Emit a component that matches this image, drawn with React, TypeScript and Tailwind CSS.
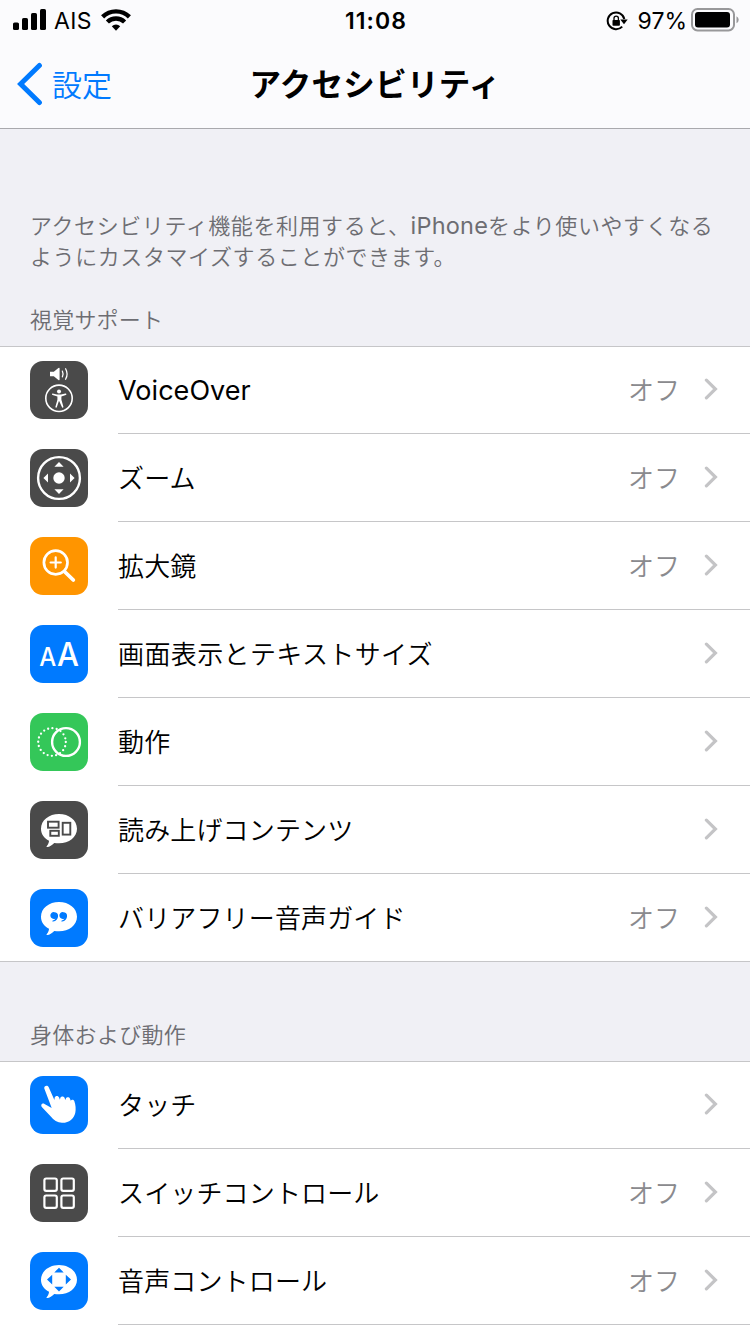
import React from 'react';

interface RowItem {
    label: string;
    icon: React.ReactNode;
    bg: string;
    value?: string;
    labelClass?: string;
}

const BUBBLE = 'M29 13C39 13 47 19.3 47 27.7C47 36 39 42.3 29 42.3C27.4 42.3 25.8 42.2 24.3 41.9C22 44.3 19.6 45.7 17.2 46C16.5 46 16.3 45.4 16.8 44.9C18.3 43.2 19 41.4 19 39.7C14 37.2 11 32.8 11 27.7C11 19.3 19 13 29 13Z';

const VoiceOverIcon = () => (
    <>
        <path d="M20 10.8h3.8l4.6-3.9q1.2-.7 1.2.5v11.2q0 1.2-1.2.5l-4.6-3.8H20z" fill="#fff" />
        <path d="M32.4 10.2q1.4 2.8 0 5.6M35.6 7.7q3 5.3 0 10.6" fill="none" stroke="#fff" strokeWidth="1.3" strokeLinecap="round" />
        <circle cx="29" cy="37.3" r="13.2" fill="none" stroke="#fff" strokeWidth="1.6" />
        <circle cx="29" cy="30.6" r="2" fill="#fff" />
        <path d="M22.6 32.4l4.4 1.2h4l4.4-1.2q1-.1 1 .8q0 .5-.6.7l-4.4 1.5v3.4l2 7q0 .9-.7.9q-.6 0-.8-.6L29 39.8l-2.1 6.3q-.2.6-.8.6q-.7 0-.7-.9l2-7v-3.4l-4.8-1.5q-.6-.2-.6-.7q0-.9.6-.8z" fill="#fff" />
    </>
);

const ZoomIcon = () => (
    <>
        <circle cx="29" cy="29" r="20.9" fill="none" stroke="#fff" strokeWidth="2.4" />
        <circle cx="29" cy="29" r="5.7" fill="#fff" />
        <path d="M29 13l4.6 4.7h-9.2zM29 45l4.6-4.7h-9.2zM13.4 29l4.6-4.6v9.2zM44.6 29L40 24.4v9.2z" fill="#fff" />
    </>
);

const MagnifierIcon = () => (
    <g fill="none" stroke="#fff" strokeLinecap="round">
        <circle cx="25.7" cy="25.5" r="11.8" strokeWidth="2.7" />
        <path d="M25.7 20.4v10.2M20.6 25.5h10.2" strokeWidth="2.2" />
        <path d="M35 35l8.3 8" strokeWidth="3.8" />
    </g>
);

const TextSizeIcon = () => (
    <g fill="#fff" className="font-['Inter'] font-medium">
        <text x="9.2" y="40.7" fontSize="25" textLength="17" lengthAdjust="spacingAndGlyphs">A</text>
        <text x="27" y="40.7" fontSize="32.5" textLength="22" lengthAdjust="spacingAndGlyphs">A</text>
    </g>
);

const MotionIcon = () => (
    <g fill="none" stroke="#fff" strokeLinecap="round">
        <circle cx="22" cy="29" r="13.8" strokeWidth="2.3" strokeDasharray="0 4.335" />
        <circle cx="36" cy="29" r="13.9" strokeWidth="2.4" />
    </g>
);

const SpokenIcon = () => (
    <>
        <path d={BUBBLE} fill="#fff" />
        <g fill="none" stroke="#4a4a4a" strokeWidth="1.9">
            <rect x="18" y="20.7" width="10.6" height="6" />
            <rect x="20.3" y="29.8" width="8.5" height="5" />
            <rect x="32.7" y="21.8" width="7.6" height="11.8" />
        </g>
    </>
);

const QuoteIcon = () => (
    <>
        <path d={BUBBLE} fill="#fff" />
        <g fill="#007aff">
            <path d="M24.5 23.2a3.6 3.6 0 0 1 3.6 3.8c0 3-2.2 5.1-4.9 5.6q-.9.1-.9-.5q0-.4.6-.6q2-.7 2.6-2.1a3.4 3.4 0 1 1-1-6.2z" />
            <path d="M33.5 23.2a3.6 3.6 0 0 1 3.6 3.8c0 3-2.2 5.1-4.9 5.6q-.9.1-.9-.5q0-.4.6-.6q2-.7 2.6-2.1a3.4 3.4 0 1 1-1-6.2z" />
        </g>
    </>
);

const TouchIcon = () => (
    <path
        d="M14.3 12.6c-.7-2.5 3-4.1 4.3-1.5L24.4 24l.3-2.4c.5-2.3 3.8-2.2 4.4-.1l.8 2.2l.4-1.6c.6-2 3.6-2 4.3 0l.8 2l.5-1.5c.7-1.8 3.4-1.7 4.1.2l.8 1.9c.5-1.4 2.8-1.5 3.5.4c1.4 4 1.7 8.2 1 11.6c-1.2 6-6.6 10.4-13.3 10.1c-4.6-.3-8.4-2.6-11.2-6.3l-9-9.6c-1.5-2 .7-4.2 2.7-2.9l7.2 3.9z"
        fill="#fff"
    />
);

const SwitchIcon = () => (
    <g fill="none" stroke="#fff" strokeWidth="2.2">
        <rect x="14.4" y="14.5" width="12.4" height="12.4" rx="1.8" />
        <rect x="31.4" y="14.5" width="12.4" height="12.4" rx="1.8" />
        <rect x="14.4" y="31.5" width="12.4" height="12.4" rx="1.8" />
        <rect x="31.4" y="31.5" width="12.4" height="12.4" rx="1.8" />
    </g>
);

const VoiceControlIcon = () => (
    <>
        <path d={BUBBLE} fill="#fff" />
        <path d="M29 15.7l4.7 4.7h-9.4zM29 39.4l4.7-4.7h-9.4zM17 27.6l5.2-4.8v9.6zM41 27.6l-5.2-4.8v9.6z" fill="#007aff" />
    </>
);

const VISION: RowItem[] = [
    { label: 'VoiceOver', icon: <VoiceOverIcon />, bg: 'bg-[#4a4a4a]', value: 'オフ', labelClass: "pt-[5px] font-['Inter'] text-[27px] font-normal tracking-[0.05px]" },
    { label: 'ズーム', icon: <ZoomIcon />, bg: 'bg-[#4a4a4a]', value: 'オフ' },
    { label: '拡大鏡', icon: <MagnifierIcon />, bg: 'bg-[#ff9500]', value: 'オフ' },
    { label: '画面表示とテキストサイズ', icon: <TextSizeIcon />, bg: 'bg-[#007aff]', labelClass: 'text-[26px] tracking-[0.38px]' },
    { label: '動作', icon: <MotionIcon />, bg: 'bg-[#34c759]' },
    { label: '読み上げコンテンツ', icon: <SpokenIcon />, bg: 'bg-[#4a4a4a]' },
    { label: 'バリアフリー音声ガイド', icon: <QuoteIcon />, bg: 'bg-[#007aff]', value: 'オフ' },
];

const PHYSICAL: RowItem[] = [
    { label: 'タッチ', icon: <TouchIcon />, bg: 'bg-[#007aff]' },
    { label: 'スイッチコントロール', icon: <SwitchIcon />, bg: 'bg-[#4a4a4a]', value: 'オフ' },
    { label: '音声コントロール', icon: <VoiceControlIcon />, bg: 'bg-[#007aff]', value: 'オフ' },
];

const Row: React.FC<{ item: RowItem; last?: boolean }> = ({ item, last }) => (
    <div className="flex h-[88px] pl-[30px]">
        <div className={`mt-[15px] h-[58px] w-[58px] shrink-0 overflow-hidden rounded-[13px] ${item.bg}`}>
            <svg viewBox="0 0 58 58" className="h-[58px] w-[58px]">{item.icon}</svg>
        </div>
        <div className={`ml-[30px] flex flex-1 items-center border-b pb-[2px] pr-8 ${last ? 'border-transparent' : 'border-[#c6c6c8]'}`}>
            <span className={`flex-1 whitespace-nowrap leading-10 ${item.labelClass ?? 'text-[26px] tracking-[0.15px]'}`}>{item.label}</span>
            {item.value && <span className="mr-6 text-[26px] leading-10 text-[#8a8a8e]">{item.value}</span>}
            <svg viewBox="0 0 14 22" className="h-[22px] w-[14px]" fill="none" stroke="#c4c4c6" strokeWidth="3.2">
                <path d="M2.4 2.2l9 8.8l-9 8.8" strokeLinecap="round" />
            </svg>
        </div>
    </div>
);

const StatusBar = () => (
    <div className="flex h-10 items-center pl-[13px] pr-[11px] font-['Inter'] text-[23px] font-normal">
        <div className="flex flex-1 items-center">
            <svg viewBox="0 0 34 22" className="h-[22px] w-[34px]">
                <rect x="0" y="13.5" width="6" height="7.5" rx="1.6" />
                <rect x="9" y="9" width="6" height="12" rx="1.6" />
                <rect x="18" y="4" width="6" height="17" rx="1.6" />
                <rect x="27" y="0" width="6" height="21" rx="1.6" />
            </svg>
            <span className="ml-[7px] w-[47px] pt-[2px] tracking-[0.3px]">AIS</span>
            <svg viewBox="0 0 30 22" className="h-[22px] w-[30px]" fill="none" stroke="#000" strokeWidth="4.4">
                <path d="M1.6 7.9a19.1 19.1 0 0 1 26.8 0" />
                <path d="M6.4 13a12.2 12.2 0 0 1 17.2 0" />
                <path d="M10.8 17.2a6 6 0 0 1 8.4 0L15 21.8z" fill="#000" stroke="none" />
            </svg>
        </div>
        <span className="pt-[2px] font-semibold tracking-[1.1px]">11:08</span>
        <div className="flex flex-1 items-center justify-end">
            <svg viewBox="0 0 22 20" className="mr-[10px] mt-px h-5 w-[22px]">
                <path d="M16.2 15.6A8.4 8.4 0 1 1 18.3 8" fill="none" stroke="#000" strokeWidth="2" />
                <path d="M14.3 8.6h7.4L18 13.2z" />
                <rect x="6.5" y="9" width="7.4" height="5.8" rx=".8" />
                <path d="M8 9.4V7.3a2.2 2.2 0 0 1 4.4 0v2.1" fill="none" stroke="#000" strokeWidth="1.3" />
            </svg>
            <span className="mr-[4px] pt-[2px]">97%</span>
            <svg viewBox="0 0 48 24" className="h-6 w-12">
                <rect x="1" y="1" width="42" height="21.4" rx="5.5" fill="none" stroke="#98989a" strokeWidth="2" />
                <rect x="4" y="4" width="35" height="15.4" rx="3" />
                <path d="M45.5 8.2q2.2 1.2 2.2 3.5t-2.2 3.5z" fill="#98989a" />
            </svg>
        </div>
    </div>
);

const App: React.FC = () => (
    <div className="h-[1334px] w-[750px] overflow-hidden bg-[#f0f0f5] font-['Noto_Sans_CJK_JP',sans-serif] font-[350] text-black" lang="ja">
        <header className="h-[129px] border-b border-[#a9a9ad] bg-[#fbfbfd]">
            <StatusBar />
            <div className="flex h-[88px] items-center">
                <div className="flex flex-1 items-center text-[#007aff]">
                    <svg viewBox="0 0 26 44" className="ml-[17px] h-[44px] w-[26px]" fill="none" stroke="currentColor" strokeWidth="5">
                        <path d="M22.4 3.5L3.6 22l18.8 18.5" strokeLinecap="round" />
                    </svg>
                    <span className="ml-[9px] pb-[3px] text-[30px] leading-10">設定</span>
                </div>
                <h1 className="pb-[4px] text-[31.5px] font-bold leading-10 tracking-[0.3px]">アクセシビリティ</h1>
                <div className="flex-1" />
            </div>
        </header>

        <div className="h-[217px] px-[30px] pt-[80px] text-[22px] text-[#6d6d72]">
            <p className="whitespace-nowrap leading-[31px] tracking-[0.58px]">
                アクセシビリティ機能を利用すると、<span className="font-['Inter'] text-[23.5px] font-normal leading-none tracking-[0.2px]">iPhone</span>をより使いやすくなる
                <br />
                ようにカスタマイズすることができます。
            </p>
            <h2 className="mt-[31px] font-[350] leading-[32px] tracking-[0.2px]">視覚サポート</h2>
        </div>

        <section className="h-[616px] border-b border-[#c6c6c8] bg-white shadow-[inset_0_1px_0_#c6c6c8]">
            {VISION.map((item, i) => (
                <Row key={item.label} item={item} last={i === VISION.length - 1} />
            ))}
        </section>

        <h2 className="h-[99px] px-[30px] pt-[55px] text-[22px] leading-[32px] tracking-[0.3px] text-[#6d6d72]">身体および動作</h2>

        <section className="h-[273px] bg-white shadow-[inset_0_1px_0_#c6c6c8]">
            {PHYSICAL.map(item => (
                <Row key={item.label} item={item} />
            ))}
        </section>
    </div>
);

export default App;
